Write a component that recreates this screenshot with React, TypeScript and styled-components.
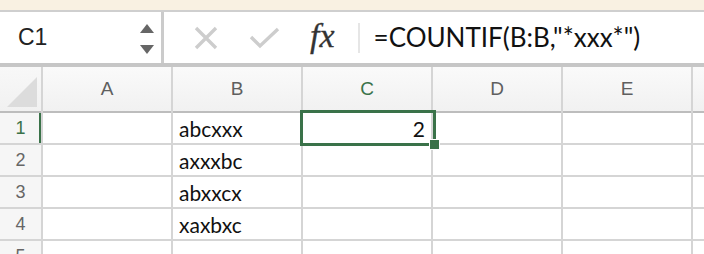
import React from 'react';
import styled, { createGlobalStyle } from 'styled-components';

const GlobalStyle = createGlobalStyle`
  body {
    margin: 0;
    background: #ffffff;
    overflow: hidden;
  }
`;

const GREEN = '#3a7249';
const COLS = ['A', 'B', 'C', 'D', 'E', ''];

const rows: string[][] = [
  ['', 'abcxxx', '2', '', '', ''],
  ['', 'axxxbc', '', '', '', ''],
  ['', 'abxxcx', '', '', '', ''],
  ['', 'xaxbxc', '', '', '', ''],
  ['', '', '', '', '', ''],
];

const Page = styled.div`
  width: 704px;
  height: 254px;
  overflow: hidden;
  display: flex;
  flex-direction: column;
`;

const TitleStrip = styled.div`
  flex-shrink: 0;
  height: 10px;
  background: #f9f1e2;
  border-bottom: 2px solid #cfcfcf;
`;

const FormulaBar = styled.div`
  flex-shrink: 0;
  height: 51px;
  display: flex;
  align-items: stretch;
  background: #fff;
  border-bottom: 4px solid #c6c6c6;
`;

const NameBox = styled.div`
  width: 164px;
  flex-shrink: 0;
  display: flex;
  align-items: center;
  justify-content: space-between;
  padding: 0 7px 0 18px;
  box-sizing: border-box;
  border-right: 3px solid #cbcbcb;
  font-family: 'Liberation Sans', Arial, sans-serif;
  font-size: 23px;
  color: #222;
`;

const Spinner = styled.div`
  display: flex;
  flex-direction: column;
  gap: 12px;
  align-items: center;
  padding-top: 2px;
`;

const FormulaTools = styled.div`
  display: flex;
  align-items: center;
  padding-left: 30px;
`;

const ToolSlot = styled.div<{ $w: number }>`
  width: ${(p) => p.$w}px;
  display: flex;
  align-items: center;
`;

const Fx = styled.span`
  font-family: 'Liberation Serif', 'Times New Roman', serif;
  font-style: italic;
  font-size: 34px;
  color: #333;
  padding-bottom: 4px;
  -webkit-text-stroke: 0.3px #333;
`;

const Divider = styled.div`
  width: 2px;
  height: 30px;
  align-self: center;
  background: #e6e6e6;
  margin: 0 14px 0 23px;
`;

const FormulaText = styled.div`
  display: flex;
  align-items: center;
  font-family: Lato, 'Open Sans', sans-serif;
  font-size: 26px;
  color: #111;
  white-space: nowrap;
  padding-bottom: 2px;
`;

const SheetWrap = styled.div`
  position: relative;
  flex: 1;
`;

const Grid = styled.div`
  display: grid;
  grid-template-columns: 41px repeat(5, 128px) 1fr;
  grid-template-rows: 44px repeat(5, 30px);
  column-gap: 2px;
  row-gap: 2px;
  background: #d5d5d5;
`;

const Corner = styled.div`
  background: linear-gradient(#f8f8f8, #f1f1f1);
  position: relative;
  box-shadow: 0 2px 0 #bdbdbd;
`;

const CornerTriangle = styled.div`
  position: absolute;
  right: 4px;
  bottom: 4px;
  width: 0;
  height: 0;
  border-left: 30px solid transparent;
  border-bottom: 30px solid #dcdcdc;
`;

const ColHeader = styled.div<{ $active?: boolean }>`
  background: linear-gradient(#fafafa, #f1f1f1);
  display: flex;
  align-items: center;
  justify-content: center;
  font-family: 'Liberation Sans', Arial, sans-serif;
  font-size: 19px;
  color: ${(p) => (p.$active ? GREEN : '#5f5f5f')};
  box-shadow: 0 2px 0 #bdbdbd;
`;

const RowHeader = styled.div<{ $active?: boolean }>`
  background: #f6f6f6;
  display: flex;
  align-items: center;
  justify-content: center;
  font-family: 'Liberation Sans', Arial, sans-serif;
  font-size: 18px;
  color: ${(p) => (p.$active ? GREEN : '#666')};
  box-shadow: ${(p) => (p.$active ? `inset -2px 0 0 ${GREEN}` : 'none')};
`;

const Cell = styled.div<{ $num?: boolean }>`
  background: #fff;
  display: flex;
  align-items: center;
  justify-content: ${(p) => (p.$num ? 'flex-end' : 'flex-start')};
  padding: 0 6px;
  font-family: Lato, 'Open Sans', sans-serif;
  font-size: 21px;
  color: #111;
  overflow: hidden;
  white-space: nowrap;
`;

const Selection = styled.div`
  position: absolute;
  left: 300px;
  top: 43px;
  width: 130px;
  height: 30px;
  border: 3px solid ${GREEN};
  pointer-events: none;
`;

const FillHandle = styled.div`
  position: absolute;
  right: -7px;
  bottom: -7px;
  width: 9px;
  height: 9px;
  background: ${GREEN};
  border: 1px solid #fff;
`;

const isNumeric = (v: string) => v !== '' && !isNaN(Number(v));

const App: React.FC = () => {
  return (
    <Page>
      <GlobalStyle />
      <TitleStrip />
      <FormulaBar>
        <NameBox>
          <span>C1</span>
          <Spinner>
            <svg width="14" height="9" viewBox="0 0 14 9">
              <polygon points="7,0 14,9 0,9" fill="#666" />
            </svg>
            <svg width="14" height="9" viewBox="0 0 14 9">
              <polygon points="0,0 14,0 7,9" fill="#666" />
            </svg>
          </Spinner>
        </NameBox>
        <FormulaTools>
          <ToolSlot $w={55}>
            <svg width="24" height="24" viewBox="0 0 24 24">
              <path d="M2 2 L22 22 M22 2 L2 22" stroke="#cdcdcd" strokeWidth="3.4" />
            </svg>
          </ToolSlot>
          <ToolSlot $w={61}>
            <svg width="31" height="23" viewBox="0 0 31 23">
              <path d="M2 11 L11 20 L29 3" stroke="#cdcdcd" strokeWidth="3.4" fill="none" />
            </svg>
          </ToolSlot>
          <Fx>fx</Fx>
        </FormulaTools>
        <Divider />
        <FormulaText>=COUNTIF(B:B,"*xxx*")</FormulaText>
      </FormulaBar>
      <SheetWrap>
        <Grid>
          <Corner>
            <CornerTriangle />
          </Corner>
          {COLS.map((c, i) => (
            <ColHeader key={`h${i}`} $active={c === 'C'}>
              {c}
            </ColHeader>
          ))}
          {rows.map((r, ri) => (
            <React.Fragment key={`r${ri}`}>
              <RowHeader $active={ri === 0}>{ri + 1}</RowHeader>
              {r.map((v, ci) => (
                <Cell key={`c${ri}-${ci}`} $num={isNumeric(v)}>
                  {v}
                </Cell>
              ))}
            </React.Fragment>
          ))}
        </Grid>
        <Selection>
          <FillHandle />
        </Selection>
      </SheetWrap>
    </Page>
  );
};

export default App;
